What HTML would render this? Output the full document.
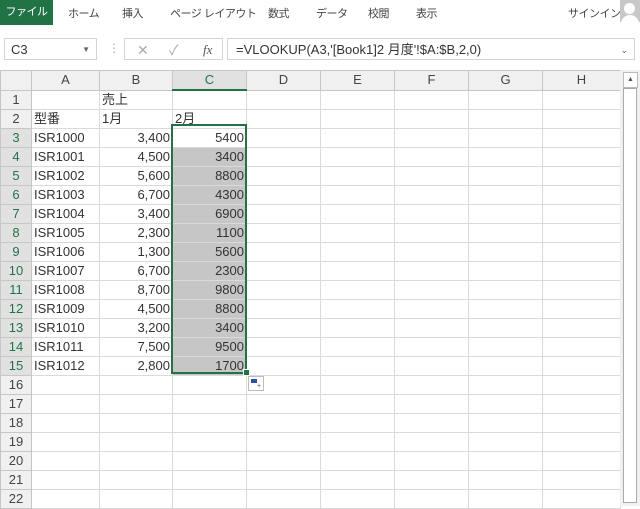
<!DOCTYPE html>
<html><head><meta charset="utf-8"><style>
body{margin:0;width:640px;height:506px;overflow:hidden;background:#fff;font-family:"Liberation Sans","Noto Sans CJK JP",sans-serif;position:relative}
.tabs{position:absolute;left:0;top:0;width:640px;height:25px;background:#fff;font-size:11px;color:#444;letter-spacing:-0.5px}
.tabs span{position:absolute;top:5px;white-space:nowrap}
.file{position:absolute;left:0;top:0;width:53px;height:25px;background:#217346;color:#fff;font-size:11px;line-height:25px;text-align:center}
.fb{position:absolute;top:38px;height:22px;border:1px solid #d4d4d4;background:#fff;font-size:13px;color:#333;line-height:22px;box-sizing:border-box}
table{position:absolute;left:0;top:70px;border-collapse:collapse;table-layout:fixed;font-size:13px;color:#333}
td{border:1px solid #dadada;height:18px;padding:0 2px;white-space:nowrap;overflow:hidden;line-height:18px}
td.h{background:#f0f0f0;text-align:center;color:#444;border-color:#c6c6c6}
tr.hd td{height:16px;background:#f0f0f0;text-align:center;color:#444;border-color:#c6c6c6}
td.sh{background:#e1e1e1!important;color:#217346!important}
td.r{text-align:right}
td.g{background:#c6c6c6;text-align:right}
</style></head><body>
<div class="tabs">
<div class="file">ファイル</div>
<span style="left:68px">ホーム</span><span style="left:122px">挿入</span><span style="left:170px">ページ レイアウト</span><span style="left:268px">数式</span><span style="left:316px">データ</span><span style="left:368px">校閲</span><span style="left:416px">表示</span><span style="left:568px">サインイン</span>
<div style="position:absolute;left:620px;top:0;width:20px;height:22px;background:#c8c8c8;overflow:hidden"><div style="position:absolute;left:4px;top:3px;width:11px;height:11px;border-radius:50%;background:#fff"></div><div style="position:absolute;left:1px;top:15px;width:18px;height:14px;border-radius:9px 9px 0 0;background:#fff"></div></div>
</div>
<div class="fb" style="left:4px;width:93px;padding-left:6px">C3<span style="position:absolute;right:6px;font-size:8px;color:#666">▼</span></div>
<div style="position:absolute;left:108px;top:41px;color:#aaa;font-size:12px">⋮</div>
<div class="fb" style="left:124px;width:99px;color:#aaa"><span style="position:absolute;left:12px;font-size:14px">✕</span><span style="position:absolute;left:44px;font-size:14px">✓</span><span style="position:absolute;left:78px;font-family:'Liberation Serif',serif;font-style:italic;color:#555">fx</span></div>
<div class="fb" style="left:227px;width:408px;padding-left:8px">=VLOOKUP(A3,'[Book1]2 月度'!$A:$B,2,0)<span style="position:absolute;right:6px;font-size:9px;color:#666">⌄</span></div>
<table>
<colgroup><col style="width:31px"><col style="width:68px"><col style="width:73px"><col style="width:74px"><col style="width:74px"><col style="width:74px"><col style="width:74px"><col style="width:74px"><col style="width:78px"></colgroup>
<tr class="hd"><td></td><td>A</td><td>B</td><td class="sh" style="border-bottom:2px solid #217346">C</td><td>D</td><td>E</td><td>F</td><td>G</td><td>H</td></tr>
<tr><td class="h">1</td><td></td><td>売上</td><td></td><td></td><td></td><td></td><td></td><td></td></tr>
<tr><td class="h">2</td><td>型番</td><td>1月</td><td>2月</td><td></td><td></td><td></td><td></td><td></td></tr>
<tr><td class="h sh">3</td><td>ISR1000</td><td class="r">3,400</td><td class="r">5400</td><td></td><td></td><td></td><td></td><td></td></tr>
<tr><td class="h sh">4</td><td>ISR1001</td><td class="r">4,500</td><td class="g">3400</td><td></td><td></td><td></td><td></td><td></td></tr>
<tr><td class="h sh">5</td><td>ISR1002</td><td class="r">5,600</td><td class="g">8800</td><td></td><td></td><td></td><td></td><td></td></tr>
<tr><td class="h sh">6</td><td>ISR1003</td><td class="r">6,700</td><td class="g">4300</td><td></td><td></td><td></td><td></td><td></td></tr>
<tr><td class="h sh">7</td><td>ISR1004</td><td class="r">3,400</td><td class="g">6900</td><td></td><td></td><td></td><td></td><td></td></tr>
<tr><td class="h sh">8</td><td>ISR1005</td><td class="r">2,300</td><td class="g">1100</td><td></td><td></td><td></td><td></td><td></td></tr>
<tr><td class="h sh">9</td><td>ISR1006</td><td class="r">1,300</td><td class="g">5600</td><td></td><td></td><td></td><td></td><td></td></tr>
<tr><td class="h sh">10</td><td>ISR1007</td><td class="r">6,700</td><td class="g">2300</td><td></td><td></td><td></td><td></td><td></td></tr>
<tr><td class="h sh">11</td><td>ISR1008</td><td class="r">8,700</td><td class="g">9800</td><td></td><td></td><td></td><td></td><td></td></tr>
<tr><td class="h sh">12</td><td>ISR1009</td><td class="r">4,500</td><td class="g">8800</td><td></td><td></td><td></td><td></td><td></td></tr>
<tr><td class="h sh">13</td><td>ISR1010</td><td class="r">3,200</td><td class="g">3400</td><td></td><td></td><td></td><td></td><td></td></tr>
<tr><td class="h sh">14</td><td>ISR1011</td><td class="r">7,500</td><td class="g">9500</td><td></td><td></td><td></td><td></td><td></td></tr>
<tr><td class="h sh">15</td><td>ISR1012</td><td class="r">2,800</td><td class="g">1700</td><td></td><td></td><td></td><td></td><td></td></tr>
<tr><td class="h">16</td><td></td><td></td><td></td><td></td><td></td><td></td><td></td><td></td></tr>
<tr><td class="h">17</td><td></td><td></td><td></td><td></td><td></td><td></td><td></td><td></td></tr>
<tr><td class="h">18</td><td></td><td></td><td></td><td></td><td></td><td></td><td></td><td></td></tr>
<tr><td class="h">19</td><td></td><td></td><td></td><td></td><td></td><td></td><td></td><td></td></tr>
<tr><td class="h">20</td><td></td><td></td><td></td><td></td><td></td><td></td><td></td><td></td></tr>
<tr><td class="h">21</td><td></td><td></td><td></td><td></td><td></td><td></td><td></td><td></td></tr>
<tr><td class="h">22</td><td></td><td></td><td></td><td></td><td></td><td></td><td></td><td></td></tr>
</table>
<div style="position:absolute;left:171px;top:124px;width:72px;height:246px;border:2px solid #217346"></div>
<div style="position:absolute;left:243px;top:369px;width:5px;height:5px;background:#217346;border:1px solid #fff"></div>
<div style="position:absolute;left:248px;top:376px;width:14px;height:13px;border:1px solid #bbb;background:#fff"><div style="position:absolute;left:2px;top:2px;width:6px;height:4px;background:#2b4fa8"></div><div style="position:absolute;left:8px;top:6px;font-size:7px;color:#555">+</div></div>
<div style="position:absolute;left:620px;top:70px;width:20px;height:436px;background:#f0f0f0">
<div style="position:absolute;left:3px;top:2px;width:13px;height:14px;border:1px solid #bbb;background:#fff;font-size:7px;text-align:center;line-height:14px;color:#555">▲</div>
<div style="position:absolute;left:3px;top:18px;width:12px;height:413px;border:1px solid #aaa;background:#fff"></div>
</div>
</body></html>
